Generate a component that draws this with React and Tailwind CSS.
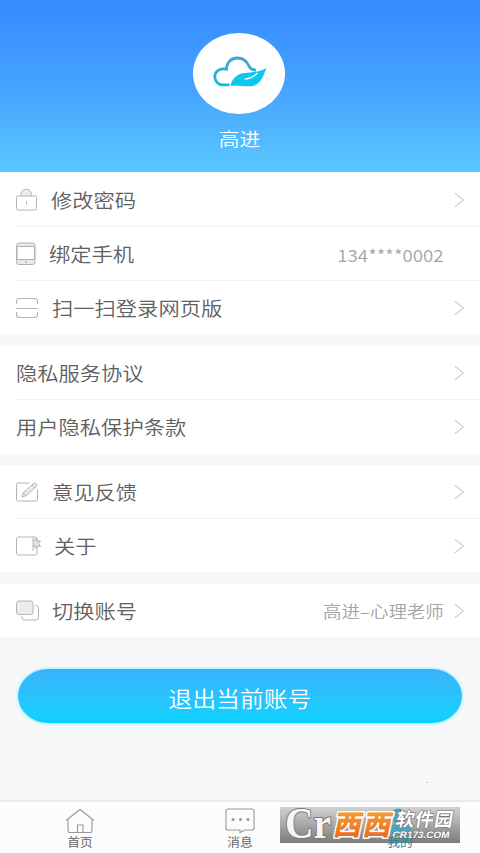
import React, { useState } from "react";

const LockIcon = () => (
  <svg width="23" height="24" viewBox="0 0 23 24" fill="none" stroke="#b4b4b6">
    <path d="M6 8V6.500a5.200 5.200 0 0 1 10.500 0V8" fill="#ececee" />
    <rect x="1.500" y="8" width="20" height="14" rx="1.500" fill="#fff" />
    <path d="M11.500 13v3.500" />
  </svg>
);

const TabletIcon = () => (
  <svg width="23" height="24" viewBox="0 0 23 24" fill="none" stroke="#b0b0b4">
    <rect x="1.500" y="1" width="18.500" height="21.500" rx="2.500" fill="#e9e9ec" />
    <path d="M2 4.500h17.500v13H2z" fill="#fff" />
    <circle cx="10.800" cy="20" r="0.600" />
  </svg>
);

const ScanIcon = () => (
  <svg width="24" height="24" viewBox="0 0 24 24" fill="none" stroke="#b4b4b6" strokeWidth="1.100">
    <path d="M1.500 8V5.500a3 3 0 0 1 3-3h15a3 3 0 0 1 3 3V8M1 12.500h22M1.500 16v2.500a3 3 0 0 0 3 3h15a3 3 0 0 0 3-3V16" />
  </svg>
);

const EditIcon = () => (
  <svg width="24" height="24" viewBox="0 0 24 24" fill="none" stroke="#b4b4b6">
    <path d="M14.500 3H3a1.500 1.500 0 0 0-1.500 1.500v15A1.500 1.500 0 0 0 3 21h18a1.500 1.500 0 0 0 1.500-1.500V9.500" />
    <path d="M7 17l1.200-4.200L18.700 3.500q1.300-.8 2.500.2t.4 2.600L11.200 15.600zM17 5l3 3M8.200 12.800l3 2.800" fill="#ececee" />
  </svg>
);

const BookIcon = () => (
  <svg width="27" height="24" viewBox="0 0 27 24" fill="none" stroke="#b4b4b6">
    <rect x="1.500" y="3" width="20.500" height="18" rx="2" />
    <path d="M18 3.500V17M18 6h3V4l1 3h3.500l-2 2.500 2 3H22l-1.500 2-.5-3-2 1" fill="#e4e4e7" />
  </svg>
);

const SwitchIcon = () => (
  <svg width="25" height="24" viewBox="0 0 25 24" fill="none" stroke="#b4b4b6">
    <path d="M20 6.500h1a2.500 2.500 0 0 1 2.500 2.500v9.500a2.500 2.500 0 0 1-2.500 2.500H9.500A2.500 2.500 0 0 1 7 18.500V17" />
    <rect x="1.500" y="2" width="16.500" height="13.500" rx="2.500" fill="#ececf0" />
  </svg>
);

const Chevron = () => (
  <svg width="11" height="16" viewBox="0 0 11 16" fill="none" stroke="#cfcfd1" strokeWidth="1.200">
    <path d="M0.800 1.200L9.500 8 0.800 14.800" />
  </svg>
);

const HomeIcon = () => (
  <svg width="30" height="26" viewBox="0 0 30 26" fill="none" stroke="#98989a" strokeWidth="1.100">
    <path d="M1 12.500L15 1.500l14 11M3 11v11.500a2 2 0 0 0 2 2h20a2 2 0 0 0 2-2V11M12.500 24.500V17h5.500v7.500" />
  </svg>
);

const MessageIcon = () => (
  <svg width="30" height="26" viewBox="0 0 30 26" fill="none" stroke="#98989a" strokeWidth="1.100">
    <path d="M3 1h24a2 2 0 0 1 2 2v17a2 2 0 0 1-2 2h-7l-5 2.500V22H3a2 2 0 0 1-2-2V3a2 2 0 0 1 2-2z" />
    <g fill="#98989a" stroke="none">
      <circle cx="8" cy="11.500" r="1.500" />
      <circle cx="15.500" cy="11.500" r="1.500" />
      <circle cx="23" cy="11.500" r="1.500" />
    </g>
  </svg>
);

const UserIcon = () => (
  <svg width="30" height="26" viewBox="0 0 30 26" fill="#4daed0">
    <circle cx="13" cy="7.500" r="7" />
    <path d="M1 25c0-7 5-10 13-10s14 3 14 10z" />
  </svg>
);

const CloudLogo = () => (
  <svg className="-mt-[3px] ml-0.5" width="54" height="32" viewBox="0 0 54 32" fill="none">
    <defs>
      <linearGradient id="cloud" x1="0" y1="0" x2="0" y2="1">
        <stop offset="0" stopColor="#41a6d2" />
        <stop offset="1" stopColor="#12bfe0" />
      </linearGradient>
    </defs>
    <path
      d="M16.500 28.800H10C5 28.800 1.800 25 1.800 21c0-5.500 5-9.500 11.700-7.800C13.500 6 18.500 2 24.500 2c6.500 0 9.500 3.700 11.500 8 1.500 3 3.500 4.200 7 4"
      stroke="url(#cloud)"
      strokeWidth="2.800"
    />
    <path
      d="M17.500 30c1-6.500 6-12 14-13 9-1 16-1 22-5-3 7.500-6 18-16.500 18.300-7 .2-13-.9-19.500-.3z"
      fill="#0dc7ef"
    />
    <path d="M31.500 23c6 0 9.500-2.500 13-6" stroke="#fff" strokeWidth="1.200" />
  </svg>
);

const groups = [
  {
    gap: "mb-3",
    rows: [
      { label: "修改密码", icon: LockIcon, pad: "pl-[51px]", height: "h-[55px]" },
      { label: "绑定手机", icon: TabletIcon, pad: "pl-[49px]", height: "h-[54px]", value: "134****0002", noArrow: true },
      { label: "扫一扫登录网页版", icon: ScanIcon, pad: "pl-[52px]", height: "h-[53px]" },
    ],
  },
  {
    gap: "mb-[11px]",
    rows: [
      { label: "隐私服务协议", pad: "pl-4", height: "h-[54px]" },
      { label: "用户隐私保护条款", pad: "pl-4", height: "h-[54px]" },
    ],
  },
  {
    gap: "mb-3",
    rows: [
      { label: "意见反馈", icon: EditIcon, pad: "pl-[52px]", height: "h-[54px]" },
      { label: "关于", icon: BookIcon, pad: "pl-[54px]", height: "h-[53px]" },
    ],
  },
  {
    gap: "",
    rows: [{ label: "切换账号", icon: SwitchIcon, pad: "pl-[52px]", height: "h-[53px]", value: "高进–心理老师" }],
  },
];

const tabs = [
  { key: "home", label: "首页", icon: HomeIcon },
  { key: "message", label: "消息", icon: MessageIcon },
  { key: "mine", label: "我的", icon: UserIcon },
];

function Row({ row, last }) {
  const Icon = row.icon;
  return (
    <div className={`grid items-center ${row.height}`}>
      {Icon && (
        <span className="col-start-1 row-start-1 pl-[15px]">
          <Icon />
        </span>
      )}
      <div className={`col-start-1 row-start-1 flex items-center justify-between pr-[15px] ${row.pad}`}>
        <span className="origin-left scale-x-[1.12] whitespace-nowrap text-[19px] font-[350] leading-7 text-[#606060]">{row.label}</span>
        <span className="flex items-center gap-[10px]">
          {row.value && (
            <span
              className={`origin-right whitespace-nowrap font-[350] text-[#a2a4a7] ${
                row.noArrow ? "mr-[21px] mt-px scale-x-[1.1] text-[17px]" : "mt-px scale-x-[1.12] text-[16.500px]"
              }`}
            >
              {row.value}
            </span>
          )}
          {!row.noArrow && <Chevron />}
        </span>
      </div>
      {!last && <div className="col-start-1 row-start-1 ml-[15px] h-px self-end bg-[#f3f3f3]" />}
    </div>
  );
}

function Watermark() {
  return (
    <svg className="absolute left-[280px] top-[792px]" width="180" height="61" viewBox="0 -12 180 61">
      <defs>
        <linearGradient id="plate" x1="0" y1="0" x2="0" y2="1">
          <stop offset="0" stopColor="#d2d2d2" />
          <stop offset="1" stopColor="#7c7c7c" />
        </linearGradient>
        <linearGradient id="orange" x1="0" y1="0" x2="0" y2="1">
          <stop offset="0" stopColor="#f9ae2c" />
          <stop offset="1" stopColor="#ea5f22" />
        </linearGradient>
      </defs>
      <rect y="3" width="180" height="36" fill="url(#plate)" />
      <g fill="#4aa3bf">
        <circle cx="118" cy="12" r="7.500" />
        <path d="M107 29c0-6 4-9 12-9s13 3 13 12v2h-5z" />
      </g>
      <g fontFamily="Liberation Serif, serif" fill="#f6f6f6" stroke="#777" strokeWidth="2" paintOrder="stroke">
        <text x="5" y="34" fontSize="45" textLength="46" lengthAdjust="spacingAndGlyphs" fontWeight="700">
          Cr
        </text>
      </g>
      <g
        transform="skewX(-12)"
        fill="url(#orange)"
        stroke="#fff"
        strokeWidth="3"
        strokeLinejoin="round"
        paintOrder="stroke"
        fontWeight="900"
        fontSize="28"
      >
        <text x="59" y="31">西</text>
        <text x="88.500" y="31">西</text>
      </g>
      <g transform="skewX(-10)" fill="#fff" stroke="#777" strokeWidth="1.300" paintOrder="stroke" fontWeight="700">
        <text x="119" y="22" fontSize="18.500" textLength="57">
          软件园
        </text>
        <text x="118" y="34" fontSize="9.500" fontFamily="Liberation Sans, sans-serif" textLength="57" lengthAdjust="spacingAndGlyphs">
          CR173.COM
        </text>
      </g>
    </svg>
  );
}

function App() {
  const [activeTab, setActiveTab] = useState("mine");

  return (
    <div className="relative flex h-[853px] w-[480px] flex-col overflow-hidden bg-[#f5f7f9] font-['Noto_Sans_CJK_SC',sans-serif]">
      <header className="flex h-[172px] shrink-0 flex-col items-center bg-linear-to-b from-[#368aff] via-[#45a2ff] to-[#5bc8ff] pt-[33px]">
        <div className="mr-0.5 flex h-[81px] w-[92px] items-center justify-center rounded-[50%] bg-white">
          <CloudLogo />
        </div>
        <div className="mt-[10px] scale-x-[1.12] text-[18.500px] font-[350] leading-7 text-white">高进</div>
      </header>

      <main className="flex-1">
        {groups.map((group, i) => (
          <section key={i} className={`bg-white ${group.gap}`}>
            {group.rows.map((row, j) => (
              <Row key={row.label} row={row} last={j === group.rows.length - 1} />
            ))}
          </section>
        ))}

        <button className="mx-[18px] mt-8 block h-[54px] w-[444px] rounded-[30px/27px] bg-linear-to-b from-[#38b2fc] to-[#05d2ff] text-white shadow-[0_0_2px_1px_#a5f1ff]">
          <span className="inline-block scale-x-[1.12] pt-[3px] text-[21.300px] font-[350] leading-7">退出当前账号</span>
        </button>
      </main>

      <nav className="flex h-[53px] shrink-0 border-t-2 border-[#e9ebed] bg-[#fbfcfc]">
        {tabs.map((tab) => {
          const Icon = tab.icon;
          return (
            <button
              key={tab.key}
              onClick={() => setActiveTab(tab.key)}
              className="flex flex-1 flex-col items-center pt-[6px]"
            >
              <Icon />
              <span
                className={`relative z-10 scale-x-[1.06] text-[12px] leading-[16px] ${activeTab === tab.key ? "text-[#188ca5]" : "text-[#666]"}`}
              >
                {tab.label}
              </span>
            </button>
          );
        })}
      </nav>

      <Watermark />
      <span className="absolute left-[427px] top-[782px] size-px bg-[#3bd13b]" />
    </div>
  );
}

export default App;
